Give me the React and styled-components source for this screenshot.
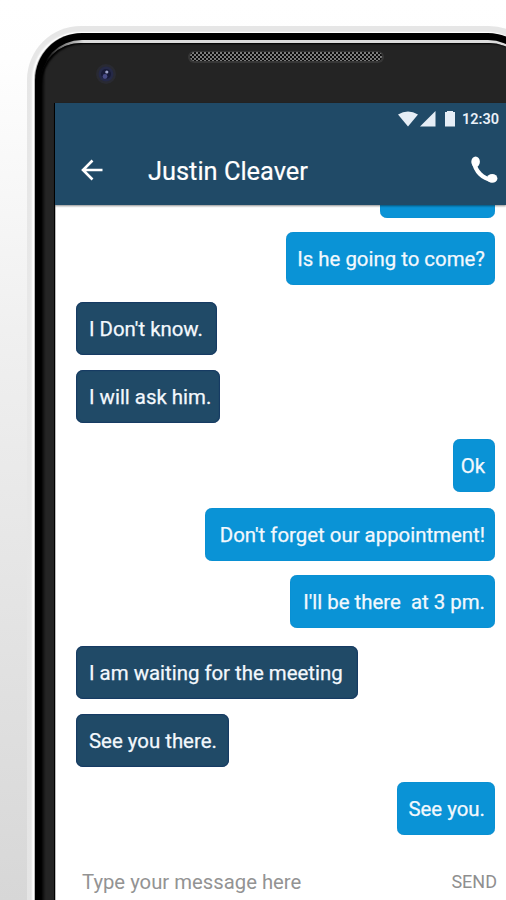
import React from "react";
import styled, { createGlobalStyle } from "styled-components";

const GlobalStyle = createGlobalStyle`
  * {
    box-sizing: border-box;
  }

  body {
    margin: 0;
    overflow: hidden;
    font-family: Roboto, "Liberation Sans", sans-serif;
  }
`;

const Stage = styled.main`
  width: 506px;
  height: 900px;
  padding: 26px 0 0 27px;
  overflow: hidden;
  background: linear-gradient(#ffffff 0, #fefefe 60px, #f0f0f0 330px, #d7d7d7 900px);
`;

const Halo = styled.div`
  width: 516px;
  height: 980px;
  padding: 7px 8px 0;
  border-radius: 54px;
  background: linear-gradient(#e6e6e6 0, #e8e8e8 300px, #e4e4e4 900px);
`;

const Shell = styled.div`
  display: flex;
  flex-direction: column;
  height: 960px;
  border-radius: 47px;
  padding: 7px 5px 0;
  background: #000;
  box-shadow: -1px 0 0 #bbb, -1px 0 1px 1px #fff, -2px 0 2px 1px #fff;
`;

/* the rim light sits on the top edge and fades out round the left corner */
const Rim = styled.div`
  display: flex;
  flex: 1;
  padding-top: 3px;
  border-radius: 42px;
  background: linear-gradient(90deg, #000 6px, #777 22px, #dcdcdc 44px);
`;

const Bezel = styled.div`
  flex: 1;
  padding-left: 15px;
  border-radius: 41px;
  background: linear-gradient(90deg, #000 0, #0c0c0c 2px, #242424 6px);
  box-shadow: inset 2px 1px 2px #000;
`;

const TopBezel = styled.div`
  display: flex;
  align-items: flex-start;
  height: 60px;
`;

const Camera = styled.svg`
  width: 22px;
  height: 22px;
  margin: 20px 0 0 40px;
`;

const Speaker = styled.svg`
  width: 196px;
  height: 14px;
  margin: 7px 0 0 71px;
`;

const Screen = styled.div`
  display: flex;
  flex-direction: column;
  width: 451px;
  height: 797px;
  background: linear-gradient(90deg, #bcbcbc 1px, #fff 1px);
  box-shadow: -1px 0 0 #000;
`;

const Header = styled.header`
  height: 102px;
  color: #fff;
  background: #204a67;
  box-shadow: 0 1px 2px rgba(0, 0, 0, 0.45);
  z-index: 1;
`;

const StatusBar = styled.div`
  display: flex;
  justify-content: flex-end;
  align-items: center;
  height: 32px;
  padding: 0 7px 0 0;
  color: #eaf1f8;
`;

const StatusIcon = styled.svg`
  width: ${(props) => props.$width}px;
  height: 16px;
  margin-right: ${(props) => props.$gap}px;
  fill: #e6eef6;
`;

const Clock = styled.span`
  padding-top: 1px;
  font-size: 14.5px;
  font-weight: 600;
  line-height: 31px;
`;

const ToolBar = styled.div`
  display: flex;
  align-items: center;
  height: 70px;
  padding: 0 8px 0 26px;
`;

const BackIcon = styled.svg`
  width: 22px;
  height: 22px;
`;

const Title = styled.h1`
  flex: 1;
  margin: 2px 0 0 45px;
  font-size: 25.4px;
  font-weight: 400;
  line-height: 32px;
  -webkit-text-stroke: 0.2px;
`;

const CallIcon = styled.svg`
  width: 28px;
  height: 28px;
  margin-top: -1px;
`;

const Messages = styled.div`
  display: flex;
  flex-direction: column;
  height: 652px;
  padding: 0 11px 0 21px;
`;

const Bubble = styled.div`
  display: flex;
  flex-shrink: 0;
  align-items: center;
  align-self: ${(props) => (props.$mine ? "flex-end" : "flex-start")};
  justify-content: ${(props) => (props.$mine ? "flex-end" : "flex-start")};
  width: ${(props) => props.$width}px;
  height: 53px;
  margin-top: ${(props) => props.$gap}px;
  padding: 0 ${(props) => (props.$mine ? 10 : 0)}px 0 13px;
  border-radius: 7px;
  font-size: 20.4px;
  white-space: pre;
  color: #f3f8fd;
  -webkit-text-stroke: 0.25px;
  background: ${(props) => (props.$mine ? "#0a93d6" : "#204a67")};
  box-shadow: ${(props) =>
    props.$mine ? "inset 0 0 1px #0879b8" : "inset 0 0 1px 1px #163a63"};
`;

const Composer = styled.footer`
  display: flex;
  justify-content: space-between;
  align-items: center;
  height: 43px;
  padding: 6px 9px 0 27px;
`;

const Placeholder = styled.span`
  font-size: 20.3px;
  color: #939393;
`;

const SendButton = styled.button`
  padding: 0;
  border: 0;
  font-family: inherit;
  font-size: 18px;
  color: #8f8f8f;
  background: none;
`;

const messages = [
  { text: "", mine: true, width: 115, gap: -40 },
  { text: "Is he going to come?", mine: true, width: 209, gap: 14 },
  { text: "I Don't know.", width: 141, gap: 17 },
  { text: "I will ask him.", width: 144, gap: 15 },
  { text: "Ok", mine: true, width: 42, gap: 16 },
  { text: "Don't forget our appointment!", mine: true, width: 290, gap: 16 },
  { text: "I'll be there  at 3 pm.", mine: true, width: 205, gap: 14 },
  { text: "I am waiting for the meeting", width: 282, gap: 18 },
  { text: "See you there.", width: 153, gap: 15 },
  { text: "See you.", mine: true, width: 98, gap: 15 },
];

export default function App() {
  return (
    <>
      <GlobalStyle />
      <Stage>
        <Halo>
          <Shell>
            <Rim>
              <Bezel>
                <TopBezel>
                  <Camera viewBox="0 0 22 22">
                    <circle cx="11" cy="11" r="10" fill="#292a32" />
                    <circle cx="11" cy="11" r="7.5" fill="#252947" />
                    <circle cx="11" cy="11" r="5" fill="#171a38" />
                    <circle cx="10" cy="13.5" r="2.4" fill="#474b86" />
                    <circle cx="11.8" cy="9" r="1.6" fill="#9da2c8" />
                  </Camera>
                  <Speaker viewBox="0 0 196 14">
                    <defs>
                      <pattern id="mesh" width="4" height="4" patternUnits="userSpaceOnUse">
                        <rect width="4" height="4" fill="#7c7c7c" />
                        <rect width="2" height="2" fill="#0c0c0c" />
                        <rect x="2" y="2" width="2" height="2" fill="#0c0c0c" />
                      </pattern>
                    </defs>
                    <rect x="0" y="1" width="196" height="12" rx="6" fill="#363636" />
                    <rect x="2" y="2" width="192" height="9" rx="4.5" fill="url(#mesh)" />
                  </Speaker>
                </TopBezel>

                <Screen>
                  <Header>
                    <StatusBar>
                      <StatusIcon $width={20} $gap={2} viewBox="0 0 20 16">
                        <path d="M0 3.5Q10-2.5 20 3.5L10 15.5Z" />
                      </StatusIcon>
                      <StatusIcon $width={16} $gap={9} viewBox="0 0 16 16">
                        <path d="M15.5 0V15.5H0Z" />
                      </StatusIcon>
                      <StatusIcon $width={10} $gap={7} viewBox="0 0 10 16">
                        <path d="M2 0H8V1H10V15.5H0V1H2Z" />
                      </StatusIcon>
                      <Clock>12:30</Clock>
                    </StatusBar>
                    <ToolBar>
                      <BackIcon viewBox="0 0 22 22" fill="none" stroke="#fff" strokeWidth="2.6">
                        <path d="M21.5 11H2M11.5 1.5L2 11L11.5 20.5" />
                      </BackIcon>
                      <Title>Justin Cleaver</Title>
                      <CallIcon viewBox="0 0 28 28">
                        <path
                          d="M4 6C5.5 15.5 12.500 22.5 22 24"
                          fill="none"
                          stroke="#fff"
                          strokeWidth="4.4"
                        />
                        <ellipse cx="5.600" cy="5.8" rx="4.300" ry="5.200" fill="#fff" />
                        <ellipse cx="22.200" cy="22.400" rx="5.200" ry="4.300" fill="#fff" />
                      </CallIcon>
                    </ToolBar>
                  </Header>

                  <Messages>
                    {messages.map((message, index) => (
                      <Bubble
                        key={index}
                        $mine={message.mine}
                        $width={message.width}
                        $gap={message.gap}
                      >
                        {message.text}
                      </Bubble>
                    ))}
                  </Messages>

                  <Composer>
                    <Placeholder>Type your message here</Placeholder>
                    <SendButton>SEND</SendButton>
                  </Composer>
                </Screen>
              </Bezel>
            </Rim>
          </Shell>
        </Halo>
      </Stage>
    </>
  );
}
